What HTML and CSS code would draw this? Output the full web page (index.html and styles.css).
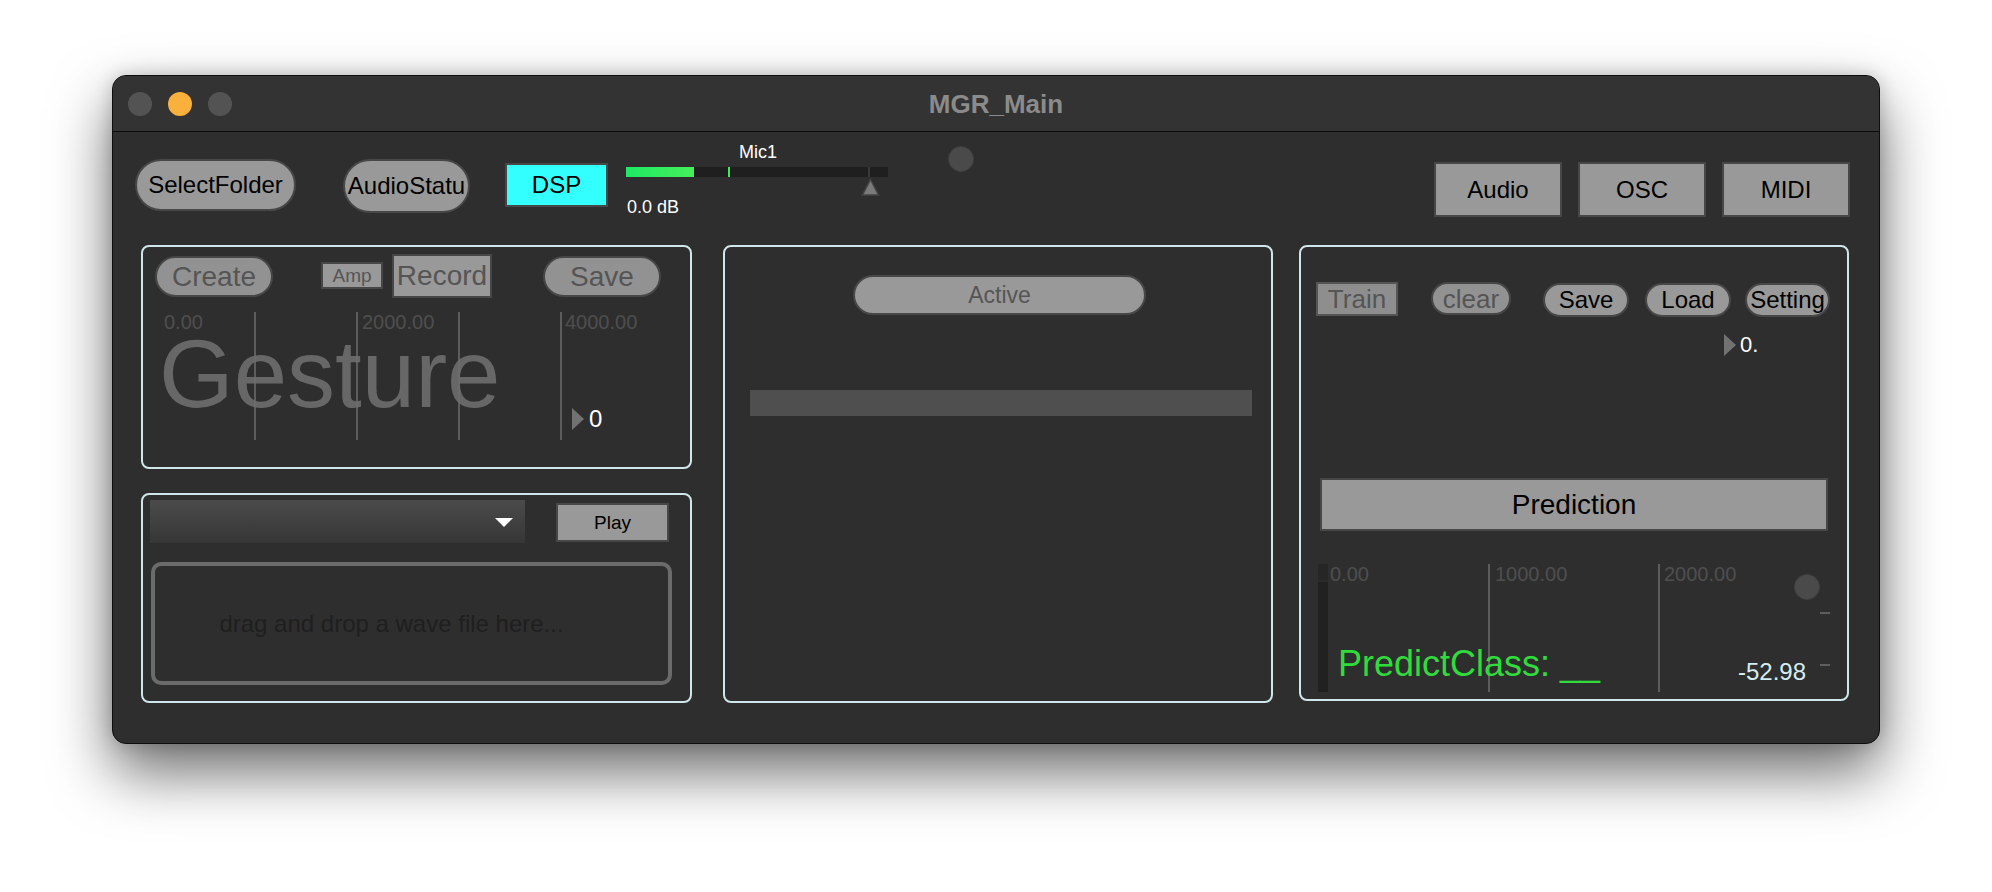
FILE: index.html
```html
<!DOCTYPE html>
<html>
<head>
<meta charset="utf-8">
<title>MGR_Main</title>
<link rel="stylesheet" href="styles.css">
</head>
<body>
<div class="window">
  <div class="titlebar">
    <div class="lights">
      <span class="light light-gray"></span>
      <span class="light light-orange"></span>
      <span class="light light-gray"></span>
    </div>
    <div class="title">MGR_Main</div>
  </div>
  <div class="content">
    <div class="toolbar">
      <div class="pill btn-select">SelectFolder</div>
      <div class="pill btn-audiostatus">AudioStatu</div>
      <div class="dsp">DSP</div>
      <div class="meter">
        <div class="meter-label">Mic1</div>
        <div class="meter-track">
          <div class="meter-fill"></div>
          <div class="meter-peak"></div>
          <div class="meter-notch"></div>
          <svg class="meter-thumb" width="19" height="18" viewBox="0 0 19 18"><polygon points="9.5,1.5 17.5,17 1.5,17" fill="#7a7a7a" stroke="#444" stroke-width="1.5"/></svg>
        </div>
        <div class="meter-db">0.0 dB</div>
      </div>
      <div class="led led-top"></div>
      <div class="tabs">
        <div class="rect-btn tab">Audio</div>
        <div class="rect-btn tab">OSC</div>
        <div class="rect-btn tab">MIDI</div>
      </div>
    </div>

    <div class="panels">
      <div class="col-left">
        <section class="panel p-gesture">
          <div class="g-row">
            <div class="pill dim btn-create">Create</div>
            <div class="rect-btn dim btn-amp">Amp</div>
            <div class="rect-btn dim btn-record">Record</div>
            <div class="pill dim btn-gsave">Save</div>
          </div>
          <div class="graph">
            <div class="gesture">Gesture</div>
            <div class="g-line gl1"></div>
            <div class="g-line gl2"></div>
            <div class="g-line gl3"></div>
            <div class="g-line gl4"></div>
            <div class="g-label gt1">0.00</div>
            <div class="g-label gt2">2000.00</div>
            <div class="g-label gt3">4000.00</div>
            <div class="numbox g-num"><span class="num-tri"></span><span class="num-val">0</span></div>
          </div>
        </section>
        <section class="panel p-player">
          <div class="pl-row">
            <div class="dropdown"><span class="dd-arrow"></span></div>
            <div class="rect-btn btn-play">Play</div>
          </div>
          <div class="dropzone">drag and drop a wave file here...</div>
        </section>
      </div>

      <section class="panel p-active">
        <div class="pill dim btn-active">Active</div>
        <div class="slider-bar"></div>
      </section>

      <section class="panel p-train">
        <div class="t-row">
          <div class="rect-btn dim btn-train">Train</div>
          <div class="pill dim btn-clear">clear</div>
          <div class="pill btn-tsave">Save</div>
          <div class="pill btn-load">Load</div>
          <div class="pill btn-setting">Setting</div>
        </div>
        <div class="numbox t-num"><span class="num-tri"></span><span class="num-val num-small">0.</span></div>
        <div class="rect-btn prediction">Prediction</div>
        <div class="pplot">
          <div class="vbar"><div class="vbar-top"></div></div>
          <div class="g-line pl1"></div>
          <div class="g-line pl2"></div>
          <div class="g-label pt1">0.00</div>
          <div class="g-label pt2">1000.00</div>
          <div class="g-label pt3">2000.00</div>
          <div class="led led-plot"></div>
          <div class="dash d1"></div>
          <div class="dash d2"></div>
          <div class="predict">PredictClass: __</div>
          <div class="pvalue">-52.98</div>
        </div>
      </section>
    </div>
  </div>
</div>
</body>
</html>
```

FILE: styles.css
```css
* { box-sizing: border-box; }
html, body { margin: 0; padding: 0; }
body {
  width: 1992px;
  height: 892px;
  background: #ffffff;
  font-family: "Liberation Sans", Arial, sans-serif;
  overflow: hidden;
}

.window {
  margin: 75px 0 0 112px;
  width: 1768px;
  height: 669px;
  border-radius: 14px;
  background: #2e2e2e;
  border: 1px solid #0e0e0e;
  box-shadow: 0 28px 60px rgba(0, 0, 0, 0.58), 0 0 18px rgba(0, 0, 0, 0.18);
  overflow: hidden;
  display: flex;
  flex-direction: column;
}

/* title bar */
.titlebar {
  position: relative;
  flex: none;
  height: 56px;
  background: #333333;
  border-bottom: 1px solid #0b0b0b;
  display: flex;
  align-items: center;
  padding-left: 15px;
}
.lights { display: flex; gap: 16px; position: relative; z-index: 1; }
.light { width: 24px; height: 24px; border-radius: 50%; display: block; }
.light-gray { background: #535353; }
.light-orange { background: #f9b03c; }
.title {
  position: absolute;
  inset: 0;
  display: flex;
  align-items: center;
  justify-content: center;
  font-size: 26px;
  font-weight: bold;
  line-height: 1;
  color: #8b8b8b;
}

.content { flex: 1; display: flex; flex-direction: column; }

/* generic controls */
.pill, .rect-btn, .dsp {
  display: flex;
  align-items: center;
  justify-content: center;
  white-space: nowrap;
  overflow: hidden;
  line-height: 1;
  color: #000;
  flex: none;
}
.pill { border-radius: 999px; background: #999999; border: 2px solid #474747; font-size: 24px; }
.rect-btn { background: #999999; border: 2px solid #474747; font-size: 24px; }
.dim { background: #929292; color: #555555; }

/* toolbar */
.toolbar {
  height: 113px;
  flex: none;
  display: flex;
  align-items: flex-start;
  padding: 0 29px 0 22px;
}
.btn-select { width: 161px; height: 52px; margin-top: 27px; }
.btn-audiostatus { width: 127px; height: 54px; margin-top: 27px; margin-left: 47px; }
.dsp {
  width: 103px; height: 44px; margin-top: 31px; margin-left: 35px;
  background: #33ffff; border: 2px solid #474747; font-size: 24px;
}
.meter { width: 262px; margin-left: 18px; margin-top: 9px; display: flex; flex-direction: column; }
.meter-label { height: 22px; line-height: 22px; font-size: 18px; color: #ffffff; text-align: center; padding-left: 2px; }
.meter-track { position: relative; height: 10px; margin-top: 4px; background: #1f1f1f; }
.meter-fill {
  position: absolute; left: 0; top: 0; width: 68px; height: 10px;
  background: linear-gradient(to right, #1fe964, #46ef5a);
}
.meter-peak { position: absolute; left: 102px; top: 0; width: 2px; height: 10px; background: #39ee5a; }
.meter-notch { position: absolute; left: 242px; top: 0; width: 2px; height: 10px; background: #3a3a3a; }
.meter-thumb { position: absolute; left: 235px; top: 11px; }
.meter-db { margin-top: 19px; height: 22px; line-height: 22px; font-size: 18px; color: #ffffff; padding-left: 1px; }

.led { width: 26px; height: 26px; border-radius: 50%; background: #4a4a4a; border: 1px solid #404040; }
.led-top { margin-left: 60px; margin-top: 14px; }

.tabs { margin-left: auto; margin-top: 30px; display: flex; gap: 16px; }
.tab { width: 128px; height: 55px; }

/* panels */
.panels { display: flex; align-items: flex-start; padding-left: 28px; }
.panel { border: 2px solid #cfe6ea; border-radius: 8px; background: #2e2e2e; }
.col-left { width: 551px; display: flex; flex-direction: column; gap: 24px; }

/* gesture panel */
.p-gesture { height: 224px; }
.g-row { display: flex; align-items: flex-start; padding: 7px 0 0 12px; }
.btn-create { width: 118px; height: 41px; margin-top: 2px; font-size: 28px; }
.btn-amp { width: 62px; height: 27px; margin-top: 8px; margin-left: 48px; font-size: 19px; background: #999; }
.btn-record { width: 100px; height: 44px; margin-left: 9px; font-size: 28px; background: #999; }
.btn-gsave { width: 118px; height: 41px; margin-top: 2px; margin-left: 51px; font-size: 28px; }

.graph { position: relative; height: 128px; margin-top: 14px; }
.gesture {
  position: absolute; left: 16px; top: 14px;
  font-size: 96px; line-height: 96px; color: #676767; white-space: nowrap;
}
.g-line { position: absolute; top: 0; width: 2px; height: 128px; background: rgba(110, 110, 110, 0.75); }
.gl1 { left: 111px; }
.gl2 { left: 213px; }
.gl3 { left: 315px; }
.gl4 { left: 417px; }
.g-label { position: absolute; top: -1px; font-size: 20px; line-height: 22px; color: #4e4e4e; white-space: nowrap; }
.gt1 { left: 21px; }
.gt2 { left: 219px; }
.gt3 { left: 422px; }

.numbox { display: flex; align-items: center; }
.num-tri {
  width: 0; height: 0;
  border-left: 12px solid #727272;
  border-top: 11.5px solid transparent;
  border-bottom: 11.5px solid transparent;
}
.num-val { margin-left: 5px; font-size: 24px; line-height: 24px; color: #ffffff; }
.num-small { font-size: 22px; margin-left: 4px; }
.g-num { position: absolute; left: 429px; top: 95px; }

/* player panel */
.p-player { height: 210px; }
.pl-row { display: flex; align-items: flex-start; padding: 5px 0 0 7px; }
.dropdown {
  position: relative;
  width: 375px; height: 43px;
  background: linear-gradient(to bottom, #4b4b4b, #363636);
}
.dd-arrow {
  position: absolute; left: 345px; top: 18px;
  width: 0; height: 0;
  border-top: 9px solid #ffffff;
  border-left: 9px solid transparent;
  border-right: 9px solid transparent;
}
.btn-play { width: 113px; height: 39px; margin-left: 31px; margin-top: 3px; font-size: 19px; }
.dropzone {
  margin: 19px 0 0 8px;
  width: 521px; height: 123px;
  border: 4px solid #6b6b6b;
  border-radius: 10px;
  display: flex; align-items: center; justify-content: center;
  padding-right: 40px;
  font-size: 24px; color: #1f1f1f;
  white-space: nowrap;
}

/* active panel */
.p-active { width: 550px; height: 458px; margin-left: 31px; }
.btn-active { width: 293px; height: 40px; margin: 28px 0 0 128px; font-size: 23px; background: #999; }
.slider-bar { width: 502px; height: 26px; margin: 75px 0 0 25px; background: #4f4f4f; }

/* train panel */
.p-train { width: 550px; height: 456px; margin-left: 26px; }
.t-row { display: flex; align-items: flex-start; padding: 35px 0 0 15px; }
.btn-train { width: 82px; height: 34px; font-size: 26px; background: #8e8e8e; border-color: #555; }
.btn-clear { width: 80px; height: 33px; margin-left: 33px; font-size: 26px; }
.btn-tsave { width: 86px; height: 34px; margin-left: 32px; margin-top: 1px; }
.btn-load { width: 86px; height: 34px; margin-left: 16px; margin-top: 1px; }
.btn-setting { width: 85px; height: 34px; margin-left: 14px; margin-top: 1px; }
.t-num { margin: 16px 0 0 423px; height: 23px; }
.prediction { width: 508px; height: 53px; margin: 122px 0 0 19px; font-size: 28px; }

.pplot { position: relative; height: 128px; margin-top: 33px; }
.vbar { position: absolute; left: 17px; top: 0; width: 10px; height: 128px; background: #212121; }
.vbar-top { height: 18px; background: #262626; border-bottom: 2px solid #2b2b2b; }
.pl1 { left: 187px; }
.pl2 { left: 357px; }
.pt1 { left: 29px; }
.pt2 { left: 194px; }
.pt3 { left: 363px; }
.led-plot { position: absolute; left: 493px; top: 10px; }
.dash { position: absolute; left: 519px; width: 10px; height: 2px; background: #5e5e5e; }
.d1 { top: 48px; }
.d2 { top: 100px; }
.predict {
  position: absolute; left: 37px; top: 82px;
  font-size: 36px; line-height: 36px; color: #2fdc3c; white-space: nowrap;
}
.pvalue {
  position: absolute; left: 437px; top: 96px;
  font-size: 24px; line-height: 24px; color: #d6ecf0; white-space: nowrap;
}
```
